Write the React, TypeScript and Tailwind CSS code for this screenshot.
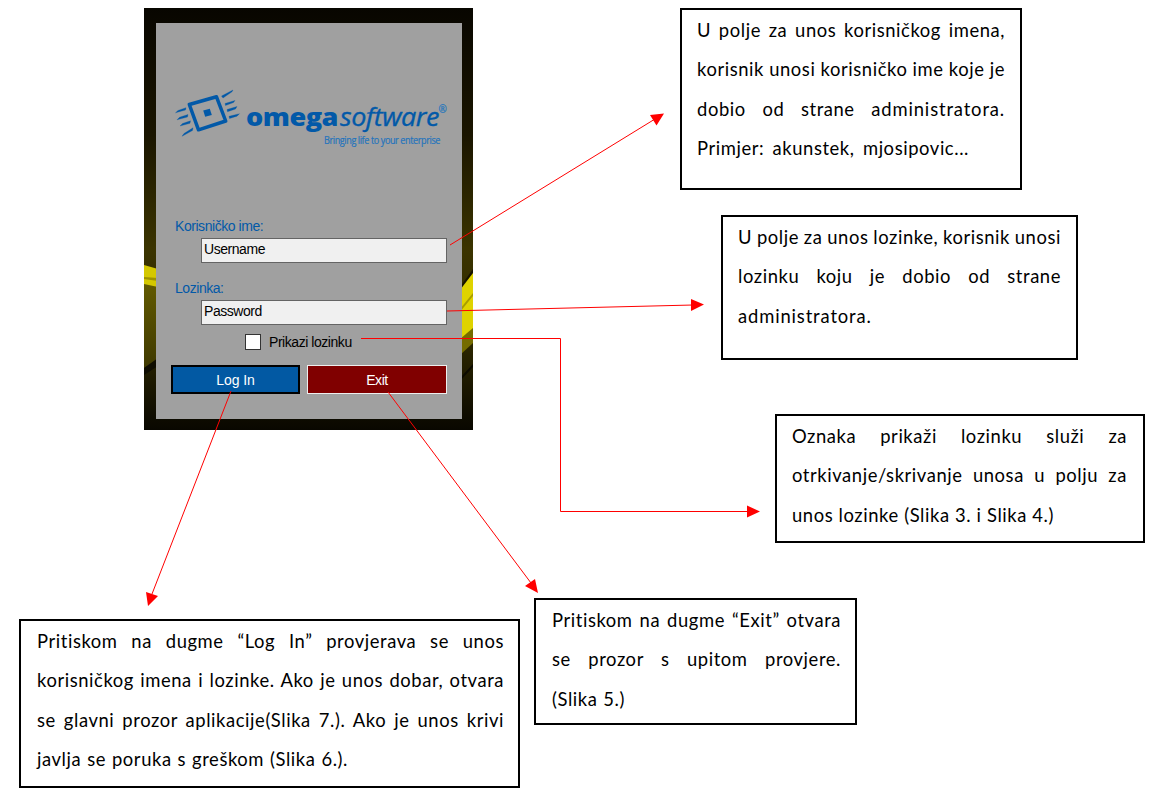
import type { ReactNode } from 'react';

type Line = { t: string; w: string; wide?: string };

function Note({ box, lines }: { box: string; lines: Line[] }) {
  return (
    <div className={`absolute border-2 border-black bg-white pt-px ${box}`}>
      {lines.map((l) => (
        <p key={l.t + l.w} className={`h-[39.4px] whitespace-nowrap text-justify [text-align-last:justify] [word-spacing:-1px] leading-[39.4px] ${l.w}`}>
          {l.t}
          {l.wide && <span className="tracking-[0.86px]">{l.wide}</span>}
        </p>
      ))}
    </div>
  );
}

function Logo() {
  return (
    <svg className="block h-[70px] w-[286px]" viewBox="170 85 286 70" fill="#0259a8">
      <path d="M189.300 104.500L216.500 96.800L225.700 121L198.500 129.800Z" fill="none" stroke="#0259a8" strokeWidth="3.500" strokeLinejoin="round" />
      <path d="M203.200 110.500L209.800 108.700L211.800 115L205.200 116.800Z" />
      <path d="M221.500 96L233 90L232 91.800L223 98ZM225 103.500L235 100.500L233.500 102.500L225.500 105.500ZM227 109.500L237 106.500L235.500 109L227.500 111.700ZM229 116.300L239.500 113.700L237 116.200L229.500 118.500ZM186 107.700L185.500 110L175.500 112.800L178 110.500ZM188 114.500L187.500 117L177 119.800L179.500 117.300ZM190.500 120.800L190 123.300L180 126L182.500 123.500ZM193 127.800L192.500 130.500L182 136.300L184 133.500Z" stroke="#0259a8" strokeWidth="0.300" />
      <text x="246" y="126" fontFamily="Open Sans" fontWeight="800" fontSize="25" textLength="92" lengthAdjust="spacingAndGlyphs">omega</text>
      <text x="340" y="126" fontFamily="Open Sans" fontStyle="italic" fontSize="26" stroke="#0259a8" strokeWidth="0.350" textLength="99" lengthAdjust="spacingAndGlyphs">software</text>
      <text x="438.500" y="113" fontFamily="Open Sans" fontSize="10" fill="#2d78bb" stroke="#2d78bb" strokeWidth="0.300">®</text>
      <text x="324" y="143.500" fontFamily="Open Sans" fontSize="10" fill="#2474bd" stroke="#2474bd" strokeWidth="0.200" textLength="116" lengthAdjust="spacingAndGlyphs">Bringing life to your enterprise</text>
    </svg>
  );
}

function Field({ label, children }: { label: string; children: ReactNode }) {
  return (
    <div className="h-[62px]">
      <div className="h-[21px] pl-[19px] leading-[18px] text-[#0259a8]">{label}</div>
      <div className="ml-[45px] h-[25px] w-[246px] border border-[#646464] bg-[#f0f0f0] pl-0.5 leading-[21px] text-black">{children}</div>
    </div>
  );
}

function Login() {
  return (
    <div className="absolute left-[144px] top-2 h-[422px] w-[329px] overflow-hidden bg-[#0d0b01] font-['Liberation_Sans',sans-serif] text-[14px] tracking-[-0.45px]">
      <svg className="absolute inset-0" width="329" height="422" viewBox="144 8 329 422">
        <defs>
          <linearGradient id="bg" x1="0" y1="0" x2="0" y2="1">
            <stop offset="0" stopColor="#080600" />
            <stop offset="0.3" stopColor="#1a1500" />
            <stop offset="0.57" stopColor="#3b3400" />
            <stop offset="0.8" stopColor="#2b2600" />
            <stop offset="1" stopColor="#090700" />
          </linearGradient>
          <linearGradient id="olive" x1="0" y1="0" x2="0" y2="1">
            <stop offset="0" stopColor="#625a00" />
            <stop offset="1" stopColor="#3f3900" />
          </linearGradient>
        </defs>
        <path d="M144 8H473V430H144Z" fill="url(#bg)" />
        <path d="M144 283L158 286V360L144 368Z" fill="url(#olive)" />
        <path d="M144 368L158 358V366L144 375Z" fill="#0e0c00" />
        <path d="M144 265L158 269V287L144 284Z" fill="#d4c800" />
        <path d="M144 277L158 278V281L144 279Z" fill="#9d9200" />
        <path d="M473 271V330L460 345V289Z" fill="#dfd300" />
        <path d="M473 269L460 287V290L473 273Z" fill="#171300" />
        <path d="M473 293L460 309V312L473 296Z" fill="#a89d00" />
        <path d="M473 328L460 339V355L473 343Z" fill="#756c00" />
        <path d="M473 364L460 378V381L473 367Z" fill="#0c0a00" />
      </svg>
      <div className="relative ml-[12px] mt-[15px] h-[396px] w-[306px] bg-[#a0a0a0]">
        <div className="h-[194px] pl-[14px] pt-[62px]"><Logo /></div>
        <Field label="Korisničko ime:">Username</Field>
        <Field label="Lozinka:">Password</Field>
        <div className="flex h-6 items-start pl-[89px]">
          <span className="mt-[-7px] h-4 w-4 border border-[#333] bg-white" />
          <span className="ml-2 mt-[-8px] leading-[18px] text-black">Prikazi lozinku</span>
        </div>
        <div className="flex gap-[7px] pl-[15px] text-white">
          <div className="h-[29px] w-[129px] border-2 border-black bg-[#0259a3] text-center leading-[26px] tracking-[-0.1px]">Log In</div>
          <div className="h-[29px] w-[140px] border border-[#eee] bg-[#800000] text-center leading-[28px]">Exit</div>
        </div>
      </div>
    </div>
  );
}

export default function App() {
  return (
    <main className="relative h-[799px] w-[1166px] overflow-hidden bg-white font-['Lato',sans-serif] text-[18.4px] tracking-[0.58px] text-black">
      <Login />
      <Note box="left-[680px] top-2 h-[182px] w-[342px] pl-[15px]" lines={[
        { t: 'U polje za unos korisničkog imena,', w: 'w-[308px]' },
        { t: 'korisnik unosi korisničko ime koje je', w: 'w-[308px]' },
        { t: 'dobio od strane ', w: 'w-[308px]', wide: 'administratora.' },
        { t: 'Primjer: akunstek, mjosipovic...', w: 'w-[272px]' },
      ]} />
      <Note box="left-[721px] top-[215px] h-[145px] w-[357px] pl-[15px]" lines={[
        { t: 'U polje za unos lozinke, korisnik unosi', w: 'w-[323px]' },
        { t: 'lozinku koju je dobio od strane', w: 'w-[323px]' },
        { t: '', w: 'w-[134px]', wide: 'administratora.' },
      ]} />
      <Note box="left-[775px] top-[414px] h-[129px] w-[370px] pl-[15px]" lines={[
        { t: 'Oznaka prikaži lozinku služi za', w: 'w-[335px]' },
        { t: 'otrkivanje/skrivanje unosa u polju za', w: 'w-[335px]' },
        { t: 'unos lozinke (Slika 3. i Slika 4.)', w: 'w-[262px]' },
      ]} />
      <Note box="left-[19px] top-[619px] h-[169px] w-[501px] pl-4" lines={[
        { t: 'Pritiskom na dugme “Log In” provjerava se unos', w: 'w-[467px]' },
        { t: 'korisničkog imena i lozinke. Ako je unos dobar, otvara', w: 'w-[467px]' },
        { t: 'se glavni prozor aplikacije(Slika 7.). Ako je unos krivi', w: 'w-[467px]' },
        { t: 'javlja se poruka s greškom (Slika 6.).', w: 'w-[311px]' },
      ]} />
      <Note box="left-[534px] top-[598px] h-[127px] w-[323px] pl-4" lines={[
        { t: 'Pritiskom na dugme “Exit” otvara', w: 'w-[289px]' },
        { t: 'se prozor s upitom provjere.', w: 'w-[289px]' },
        { t: '(Slika 5.)', w: 'w-[73px]' },
      ]} />
      <svg className="pointer-events-none absolute inset-0" width="1166" height="799" fill="none" stroke="#ff0000" strokeWidth="1">
        <path d="M450 245L655 119M447 311L693 305M361 338.500H560.500V511.500H748M231 391L152 594M388 392L531 583" />
        <path d="M664 113.500L656.500 125.500L650 115ZM704 304.500L691 311V299ZM760 511.500L747 517.500V505.500ZM148 606L146 592L158 596ZM538 593L525 586L535 579Z" fill="#ff0000" stroke="none" />
      </svg>
    </main>
  );
}
